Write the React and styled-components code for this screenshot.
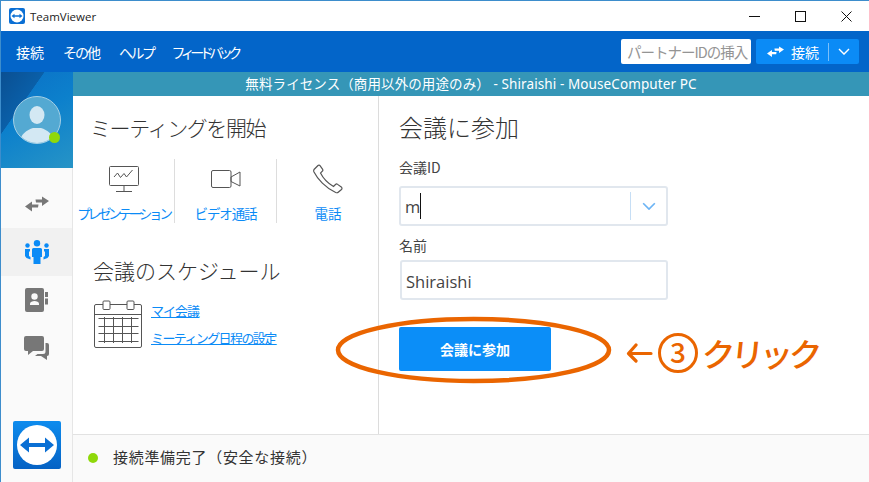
import styled, { createGlobalStyle } from 'styled-components'

const Global = createGlobalStyle`
  html, body { margin: 0; padding: 0; background: #fff; }
  * { box-sizing: border-box; }
  body { font-family: "Noto Sans CJK JP", "Noto Sans", sans-serif; }
`

const Window = styled.div`
  position: relative;
  width: 869px;
  height: 482px;
  overflow: hidden;
  display: flex;
  flex-direction: column;
  border-top: 1px solid #3d8dcc;
  border-left: 1px solid #3d8dcc;
  background: #fff;
`

const TitleBar = styled.div`
  height: 30px;
  flex: none;
  display: flex;
  align-items: center;
  padding-left: 8px;
  gap: 5px;
  font-family: "Open Sans", sans-serif;
  font-size: 11.5px;
  color: #222;
`

const WinButtons = styled.div`
  margin-left: auto;
  display: flex;
  align-items: center;
  color: #111;
`

const WinButton = styled.div`
  width: 46px;
  height: 30px;
  display: flex;
  align-items: center;
  justify-content: center;
`

const MenuBar = styled.div`
  height: 41px;
  flex: none;
  display: flex;
  align-items: center;
  background: #0365c9;
  padding: 0 10px 0 15px;
`

const MenuItem = styled.div`
  color: #fff;
  font-size: 14px;
  white-space: nowrap;
  margin-right: ${p => p.$gap}px;
  letter-spacing: ${p => p.$spacing || 0}px;
`

const PartnerInput = styled.div`
  margin-left: auto;
  width: 130px;
  height: 25px;
  background: #fff;
  border-radius: 2px;
  color: #949494;
  font-size: 14.5px;
  line-height: 25px;
  padding-left: 6px;
  white-space: nowrap;
  letter-spacing: -1px;
  margin-right: 5px;
`

const ConnectButton = styled.div`
  width: 103px;
  height: 25px;
  background: #0b8bf6;
  border-radius: 2px;
  display: flex;
  align-items: center;
  color: #fff;
  font-size: 14px;
  padding-left: 11px;
`

const ConnectLabel = styled.span`
  margin-left: 7px;
  width: 28px;
`

const ConnectSplit = styled.span`
  width: 1px;
  height: 18px;
  background: #7cc0fa;
  margin-left: 9px;
  margin-right: 9px;
`

const Body = styled.div`
  flex: 1;
  min-height: 0;
  display: flex;
`

const Sidebar = styled.div`
  width: 72px;
  flex: none;
  display: flex;
  flex-direction: column;
  background: #fafafa;
  border-right: 1px solid #e6e6e6;
`

const Profile = styled.div`
  position: relative;
  height: 96px;
  flex: none;
  margin-right: -1px;
  padding: 24px 0 0 12px;
  background:
    linear-gradient(125deg, #0a4f92 0, #0a5fa8 31%, transparent 31.5%),
    linear-gradient(150deg, #0b70c6 0, #0c80cc 45%, #2794c6 100%);
`

const Avatar = styled.div`
  position: relative;
  width: 48px;
  height: 48px;
  border-radius: 50%;
  background: #54a9d2;
  border: 1px solid #a5d0e6;
  overflow: hidden;
`

const StatusDot = styled.span`
  position: absolute;
  left: ${p => p.$left}px;
  top: ${p => p.$top}px;
  width: 11px;
  height: 11px;
  border-radius: 50%;
  background: #8fd80a;
`

const Nav = styled.div`
  padding-top: 12px;
  display: flex;
  flex-direction: column;
`

const NavItem = styled.div`
  height: 48px;
  display: flex;
  align-items: center;
  justify-content: center;
  background: ${p => p.$active ? '#f1f1f1' : 'transparent'};
`

const LogoTile = styled.div`
  margin: auto 0 13px 12px;
  width: 48px;
  height: 48px;
  border-radius: 2px;
  background: linear-gradient(180deg, #0e8cee, #0562c4);
  display: flex;
  align-items: center;
  justify-content: center;
`

const Content = styled.div`
  flex: 1;
  min-width: 0;
  display: flex;
  flex-direction: column;
`

const Banner = styled.div`
  height: 24px;
  flex: none;
  background: #3596b7;
  color: #fff;
  font-size: 13.5px;
  line-height: 24px;
  text-align: center;
  white-space: nowrap;
  font-family: "Noto Sans", "Noto Sans CJK JP", sans-serif;
  letter-spacing: 0.1px;
`

const Panels = styled.div`
  flex: 1;
  min-height: 0;
  display: flex;
`

const LeftPanel = styled.div`
  width: 306px;
  flex: none;
  border-right: 1px solid #dcdcdc;
`

const RightPanel = styled.div`
  flex: 1;
  padding: 15px 0 0 20px;
`

const Heading = styled.h2`
  margin: ${p => p.$top || 0}px 0 0;
  font-weight: 300;
  font-size: ${p => p.$size || 21}px;
  line-height: 32px;
  color: #333;
  white-space: nowrap;
  letter-spacing: ${p => p.$spacing || 0}px;
  padding-left: ${p => p.$indent || 0}px;
`

const Tiles = styled.div`
  display: grid;
  grid-template-columns: 102px 102px 102px;
  margin-top: 16px;
`

const Tile = styled.div`
  height: 64px;
  padding-bottom: 1px;
  display: flex;
  flex-direction: column;
  align-items: center;
  justify-content: space-between;
  border-right: ${p => p.$last ? 'none' : '1px solid #ddd'};
`

const TileIcon = styled.div`
  height: 40px;
  display: flex;
  align-items: center;
  justify-content: center;
`

const TileLabel = styled.div`
  font-size: 13.5px;
  line-height: 18px;
  color: #0b8bf6;
  white-space: nowrap;
  letter-spacing: ${p => p.$spacing || 0}px;
`

const Schedule = styled.div`
  display: flex;
  gap: 9px;
  padding: 14px 0 0 21px;
`

const LinkColumn = styled.div`
  display: flex;
  flex-direction: column;
  gap: 9px;
  padding-top: 2px;
`

const ScheduleLink = styled.a`
  font-size: 13px;
  line-height: 18px;
  color: #0b8bf6;
  text-decoration: underline;
  white-space: nowrap;
  letter-spacing: ${p => p.$spacing}px;
`

const FieldLabel = styled.div`
  font-size: 14px;
  line-height: 18px;
  color: #444;
  margin-top: ${p => p.$top}px;
`

const Field = styled.div`
  width: ${p => p.$width}px;
  height: 40px;
  margin-top: ${p => p.$top || 0}px;
  margin-left: ${p => p.$indent || 0}px;
  border: 2px solid #e1e7ee;
  border-radius: 3px;
  display: flex;
  align-items: center;
  padding: ${p => p.$drop || 0}px 10px 0 4px;
  font-family: "Open Sans", sans-serif;
  font-size: 16.5px;
  color: #444;
`

const Caret = styled.span`
  width: 1px;
  height: 26px;
  background: #111;
`

const FieldSplit = styled.span`
  margin-left: auto;
  width: 1px;
  height: 28px;
  background: #c6def5;
  margin-right: 11px;
`

const JoinButton = styled.div`
  width: 152px;
  height: 44px;
  margin-top: 27px;
  background: #0b8ef8;
  border-radius: 2px;
  color: #fff;
  font-size: 14px;
  font-weight: 700;
  display: flex;
  align-items: center;
  justify-content: center;
`

const StatusBar = styled.div`
  height: 48px;
  flex: none;
  background: #fafafa;
  border-top: 1px solid #e2e2e2;
  display: flex;
  align-items: center;
  gap: 15px;
  padding: 0 0 4px 15px;
  font-size: 15px;
  letter-spacing: 0.7px;
  color: #333;
`

const InlineDot = styled.span`
  width: 10px;
  height: 10px;
  margin-top: 3px;
  border-radius: 50%;
  background: #8fd80a;
`

const MarkupRing = styled.svg`
  position: absolute;
  left: 329px;
  top: 309px;
`

const MarkupText = styled.div`
  position: absolute;
  left: 625px;
  top: 328px;
  display: flex;
  align-items: center;
  height: 48px;
  color: #ea6500;
  white-space: nowrap;
`

const MarkupCircle = styled.span`
  width: 40px;
  height: 40px;
  margin: 0 4px 0 5px;
  border: 3px solid #ea6500;
  border-radius: 50%;
  font-size: 28px;
  font-weight: 500;
  line-height: 31px;
  text-align: center;
`

const MarkupWord = styled.span`
  font-size: 33px;
  font-weight: 500;
  letter-spacing: -4px;
  transform: skewX(-6deg);
`

function ArrowsIcon({ color = '#777', w = 24 }) {
  return (
    <svg width={w} height={w * 0.67} viewBox="0 0 24 16" fill={color}>
      <path d="M0 10.500 7 5.500V8.500H13.500L13 11.500H7V15.500Z" />
      <path d="M24 5 17 .5V3.500H10.500L11 6.500H17V10Z" />
    </svg>
  )
}

function LogoMark({ size, circle = '#fff', arrow = '#0a6fd4' }) {
  return (
    <svg width={size} height={size} viewBox="0 0 40 40">
      <circle cx="20" cy="20" r="20" fill={circle} />
      <path fill={arrow} d="M3 20 12 12.500V18H28V12.500L37 20 28 27.500V22H12V27.500Z" />
    </svg>
  )
}

function PeopleIcon() {
  return (
    <svg width="26" height="25" viewBox="0 0 26 25" fill="#0b8bf6">
      <circle cx="13" cy="3.200" r="3.200" />
      <path d="M9.500 8h7a1.500 1.500 0 0 1 1.500 1.500V17h-1.500v7h-7v-7H8V9.500A1.500 1.500 0 0 1 9.500 8Z" />
      <circle cx="3.500" cy="5.500" r="2.200" />
      <circle cx="22.500" cy="5.500" r="2.200" />
      <path d="M1 9h5v2.500H5V16l1.500 1v2.500L2.500 18 1 16ZM25 9h-5v2.500h1V16l-1.500 1v2.500l4-1.500 1.500-2Z" />
    </svg>
  )
}

function ContactsIcon() {
  return (
    <svg width="23" height="24" viewBox="0 0 23 24">
      <path fill="#777" d="M2 0h15a2 2 0 0 1 2 2v20a2 2 0 0 1-2 2H2a2 2 0 0 1-2-2V2a2 2 0 0 1 2-2ZM20 4h3v5h-3ZM20 10.500h3v6h-3Z" />
      <circle cx="9.500" cy="8.500" r="3.200" fill="#fafafa" />
      <path fill="#fafafa" d="M5 17v-1.500c0-1.600 2.500-2.500 4.500-2.500s4.500.9 4.500 2.500V17Z" />
    </svg>
  )
}

function ChatIcon() {
  return (
    <svg width="25" height="24" viewBox="0 0 25 24" fill="#777">
      <path d="M2 0h16a2 2 0 0 1 2 2v11a2 2 0 0 1-2 2H9l-5 4v-4H2a2 2 0 0 1-2-2V2a2 2 0 0 1 2-2Z" />
      <path d="M21.500 7H23a2 2 0 0 1 2 2v9a2 2 0 0 1-2 2v4l-6-4h-6l2.500-2H19a2.500 2.500 0 0 0 2.500-2.500Z" />
    </svg>
  )
}

function MonitorIcon() {
  return (
    <svg width="32" height="28" viewBox="0 0 32 28" fill="none" stroke="#555" strokeWidth="1">
      <rect x="1.500" y="1.500" width="29" height="19" rx="1" />
      <path d="M16 20.500V26M8 26.500H24" />
      <path d="M6 12l3.500-4 3 4.500 3.500-4 2.500 3.500 6-7" />
    </svg>
  )
}

function CameraIcon() {
  return (
    <svg width="32" height="20" viewBox="0 0 32 20" fill="none" stroke="#555" strokeWidth="1">
      <rect x="1.500" y="1.500" width="19.500" height="17" rx="1.500" />
      <path d="M21 8l9-5v14l-9-4.500Z" />
    </svg>
  )
}

function PhoneIcon() {
  return (
    <svg width="30" height="30" viewBox="0 0 30 30" fill="none" stroke="#555" strokeWidth="1.200">
      <path d="M1 5.500 5 1.500c.6-.6 1.500-.5 2 .2l2.500 3.500c.5.7.4 1.500-.2 2L7.500 9c2.500 5 7 10 13 13.500l2-2c.6-.6 1.500-.6 2.100-.1l3.700 2.700c.8.600.9 1.700.2 2.400L25.500 28c-.7.700-1.800.9-2.800.5C12.500 24 4.500 15 1 8c-.4-.9-.4-1.800 0-2.500Z" />
    </svg>
  )
}

function CalendarIcon() {
  return (
    <svg width="48" height="48" viewBox="0 0 48 48" fill="none" stroke="#555" strokeWidth="1" style={{ flex: 'none' }}>
      <path d="M9 4.500H2A1.500 1.500 0 0 0 .5 6v40A1.500 1.500 0 0 0 2 47.500h44a1.500 1.500 0 0 0 1.500-1.500V6A1.500 1.500 0 0 0 46 4.500H40M16 4.500H33M.5 14.500H47.500" />
      <rect x="9" y="1" width="7" height="8.500" rx="1" />
      <rect x="33" y="1" width="7" height="8.500" rx="1" />
      {[18.500, 26.500, 33.500, 41.500].map(y => <path key={y} d={`M4.500 ${y}H44.500`} />)}
      {[10.500, 19.500, 28.500, 37.500].map(x => <path key={x} d={`M${x} 17V43`} />)}
    </svg>
  )
}

function Chevron({ color, w = 12 }) {
  return (
    <svg width={w} height={w * 0.6} viewBox="0 0 12 7" fill="none" stroke={color} strokeWidth="1.400" style={{ flex: 'none' }}>
      <path d="M1 1l5 5 5-5" />
    </svg>
  )
}

function App() {
  return (
    <>
      <Global />
      <Window>
        <TitleBar>
          <svg width="16" height="16" viewBox="0 0 16 16" style={{ borderRadius: 2, background: '#0a6fd4' }}>
            <circle cx="8" cy="8" r="6.500" fill="#fff" />
            <path fill="#0a6fd4" d="M2.500 8 5.500 5.800V7.200H10.500V5.800L13.500 8 10.500 10.200V8.800H5.500V10.200Z" />
          </svg>
          TeamViewer
          <WinButtons>
            <WinButton>
              <svg width="11" height="11" viewBox="0 0 11 11" stroke="#111"><path d="M0 5.500H11" /></svg>
            </WinButton>
            <WinButton>
              <svg width="11" height="11" viewBox="0 0 11 11" fill="none" stroke="#111"><rect x=".5" y=".5" width="10" height="10" /></svg>
            </WinButton>
            <WinButton>
              <svg width="11" height="11" viewBox="0 0 11 11" stroke="#111"><path d="M.5.500l10 10M10.500.500l-10 10" /></svg>
            </WinButton>
          </WinButtons>
        </TitleBar>

        <MenuBar>
          <MenuItem $gap={19}>接続</MenuItem>
          <MenuItem $gap={20} $spacing={-2}>その他</MenuItem>
          <MenuItem $gap={18} $spacing={-2.500}>ヘルプ</MenuItem>
          <MenuItem $gap={0} $spacing={-4.500}>フィードバック</MenuItem>
          <PartnerInput>パートナーIDの挿入</PartnerInput>
          <ConnectButton>
            <ArrowsIcon color="#fff" w={17} />
            <ConnectLabel>接続</ConnectLabel>
            <ConnectSplit />
            <Chevron color="#fff" />
          </ConnectButton>
        </MenuBar>

        <Body>
          <Sidebar>
            <Profile>
              <Avatar>
                <svg width="46" height="46" viewBox="0 0 46 46" fill="#d3e8f3">
                  <ellipse cx="23" cy="18" rx="7.500" ry="9" />
                  <path d="M6 46c0-9 7-13 13-15h8c6 2 13 6 13 15Z" />
                </svg>
              </Avatar>
              <StatusDot $left={48} $top={60} />
            </Profile>
            <Nav>
              <NavItem><ArrowsIcon /></NavItem>
              <NavItem $active><PeopleIcon /></NavItem>
              <NavItem><ContactsIcon /></NavItem>
              <NavItem><ChatIcon /></NavItem>
            </Nav>
            <LogoTile>
              <LogoMark size={40} />
            </LogoTile>
          </Sidebar>

          <Content>
            <Banner>無料ライセンス（商用以外の用途のみ） - Shiraishi - MouseComputer PC</Banner>
            <Panels>
              <LeftPanel>
                <Heading $size={21} $spacing={-1.400} $indent={17} $top={15}>ミーティングを開始</Heading>
                <Tiles>
                  <Tile>
                    <TileIcon><MonitorIcon /></TileIcon>
                    <TileLabel $spacing={-3.200}>プレゼンテーション</TileLabel>
                  </Tile>
                  <Tile>
                    <TileIcon><CameraIcon /></TileIcon>
                    <TileLabel $spacing={-1.100}>ビデオ通話</TileLabel>
                  </Tile>
                  <Tile $last>
                    <TileIcon><PhoneIcon /></TileIcon>
                    <TileLabel>電話</TileLabel>
                  </Tile>
                </Tiles>
                <Heading $size={21} $indent={20} $top={31}>会議のスケジュール</Heading>
                <Schedule>
                  <CalendarIcon />
                  <LinkColumn>
                    <ScheduleLink $spacing={-1}>マイ会議</ScheduleLink>
                    <ScheduleLink $spacing={-1.600}>ミーティング日程の設定</ScheduleLink>
                  </LinkColumn>
                </Schedule>
              </LeftPanel>
              <RightPanel>
                <Heading $size={24}>会議に参加</Heading>
                <FieldLabel $top={15}>会議ID</FieldLabel>
                <Field $top={10} $width={269}>
                  m<Caret />
                  <FieldSplit />
                  <Chevron color="#6cb4f5" w={14} />
                </Field>
                <FieldLabel $top={10}>名前</FieldLabel>
                <Field $top={6} $indent={1} $width={268} $drop={2}>Shiraishi</Field>
                <JoinButton>会議に参加</JoinButton>
              </RightPanel>
            </Panels>
            <StatusBar>
              <InlineDot />
              接続準備完了（安全な接続）
            </StatusBar>
          </Content>
        </Body>

        <MarkupRing width="290" height="80" viewBox="0 0 290 80" fill="none">
          <ellipse cx="143.500" cy="40" rx="135.500" ry="31" stroke="#ea6500" strokeWidth="4.500" />
        </MarkupRing>
        <MarkupText>
          <svg width="27" height="20" viewBox="0 0 27 20" fill="none" stroke="#ea6500" strokeWidth="3.200" strokeLinecap="round" strokeLinejoin="round">
            <path d="M25 10.500H3M10 2 2.500 10.500 10 18" />
          </svg>
          <MarkupCircle>3</MarkupCircle>
          <MarkupWord>クリック</MarkupWord>
        </MarkupText>
      </Window>
    </>
  )
}

export default App
